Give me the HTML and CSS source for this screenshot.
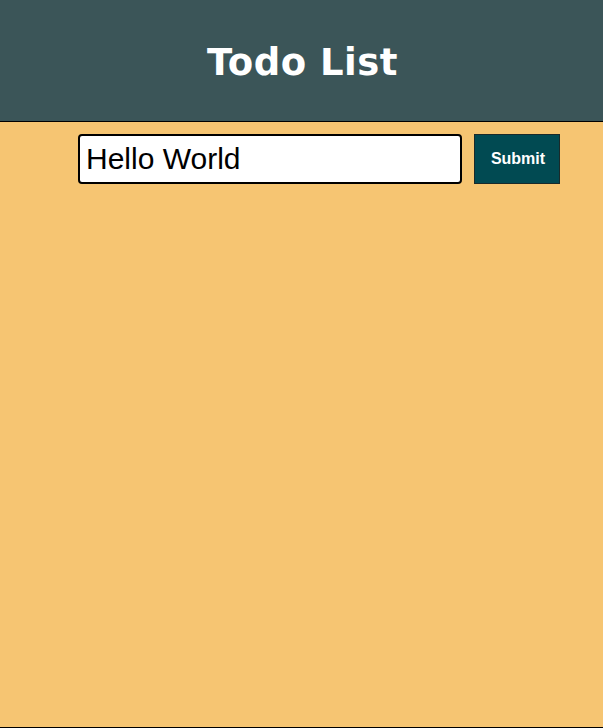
FILE: index.html
```html
<!DOCTYPE html>
<html lang="en">
<head>
<meta charset="utf-8">
<title>Todo List</title>
<link rel="stylesheet" href="styles.css">
</head>
<body>
<div class="page">
  <header class="header">
    <h1 class="title">Todo List</h1>
  </header>
  <form class="todo-form">
    <input class="todo-input" type="text" value="Hello World">
    <button class="submit-btn" type="button">Submit</button>
  </form>
</div>
</body>
</html>
```
FILE: styles.css
```css
* { box-sizing: border-box; }
html, body { margin: 0; padding: 0; }
body {
  background: #f6c572;
  font-family: "Liberation Sans", Arial, sans-serif;
}
.page {
  height: 728px;
  border-bottom: 1px solid #000;
}
.header {
  height: 122px;
  background: #3b5558;
  border-bottom: 1px solid #000;
  display: flex;
  align-items: center;
  justify-content: center;
}
.title {
  margin: 4px 0 0 2px;
  color: #fff;
  font-family: "DejaVu Sans", Verdana, sans-serif;
  font-weight: bold;
  font-size: 37px;
  letter-spacing: 0.5px;
  line-height: 1;
}
.todo-form {
  display: flex;
  gap: 12px;
  padding: 12px 0 0 78px;
}
.todo-input {
  width: 384px;
  height: 50px;
  border: 2px solid #000;
  border-radius: 4px;
  background: #fff;
  padding: 0 6px;
  font-family: "Liberation Sans", Arial, sans-serif;
  font-size: 30px;
  color: #000;
  outline: none;
}
.submit-btn {
  width: 86px;
  height: 50px;
  background: #014a52;
  border: 1px solid #1a2a2a;
  color: #fff;
  font-family: "Liberation Sans", Arial, sans-serif;
  font-weight: bold;
  font-size: 16px;
  padding: 0 0 0 2px;
}
```
